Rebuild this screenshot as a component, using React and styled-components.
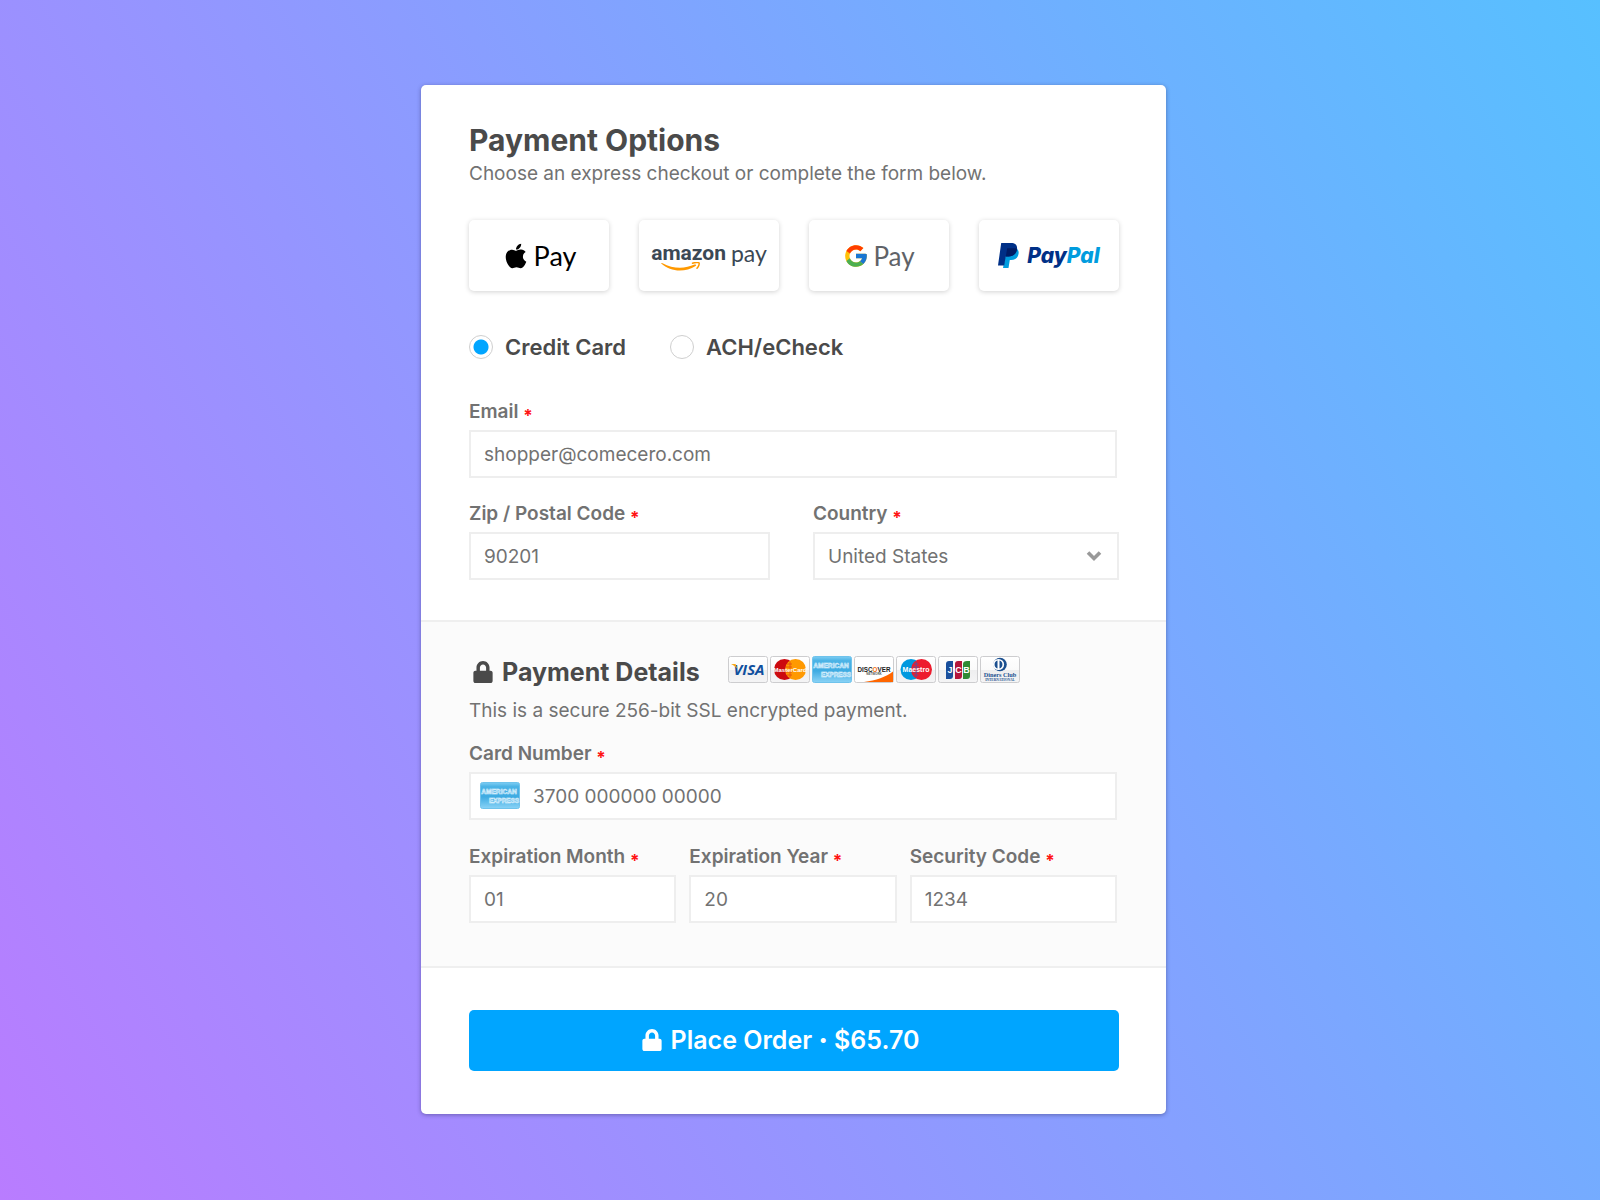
import React, { useState } from 'react';
import styled, { createGlobalStyle, css } from 'styled-components';
import { FaLock, FaApple } from 'react-icons/fa';
import { FcGoogle } from 'react-icons/fc';

const GlobalStyle = createGlobalStyle`
  *, *::before, *::after { box-sizing: border-box; }
  body { margin: 0; background: #8f9aff; }
  button, input, select { font: inherit; }
`;

const Page = styled.main`
  min-height: 100vh;
  display: flex;
  justify-content: center;
  align-items: flex-start;
  padding: 85px 29px 86px 16px;
  background: linear-gradient(60deg, #b97cff 0%, #57c0ff 100%);
  font-family: Inter, "Liberation Sans", sans-serif;
  color: #727272;
  font-size: 19px;
`;

const Card = styled.form`
  width: 100%;
  max-width: 745px;
  background: #fff;
  border-radius: 5px;
  box-shadow: 0 1px 4px rgba(40, 40, 90, 0.45);
`;

const Section = styled.section`
  padding: 37px 47px 40px 48px;
`;

const DetailsSection = styled(Section)`
  padding-top: 32px;
  padding-bottom: 43px;
  background: #fbfbfb;
  border: solid #efefef;
  border-width: 2px 0;
`;

const SubmitSection = styled(Section)`
  padding-top: 42px;
  padding-bottom: 43px;
`;

const Title = styled.h1`
  margin: 0;
  font-size: 30px;
  line-height: 36px;
  font-weight: 700;
  color: #4a4a4a;
`;

const Subtitle = styled.p`
  margin: 0;
  line-height: 32px;
`;

const ExpressRow = styled.div`
  display: grid;
  grid-template-columns: repeat(4, 1fr);
  gap: 30px;
  margin-top: 30px;
`;

const ExpressButton = styled.button`
  height: 71px;
  padding: 0;
  border: 0;
  border-radius: 5px;
  background: #fff;
  box-shadow: 0 1px 5px rgba(0, 0, 0, 0.18);
  display: flex;
  align-items: center;
  justify-content: center;
  cursor: pointer;
`;

const Wordmark = styled.span`
  display: inline-flex;
  align-items: center;
  gap: ${(p) => p.$gap || 0}px;
  font-family: ${(p) => p.$face}, sans-serif;
  font-size: ${(p) => p.$size}px;
  font-weight: ${(p) => p.$weight || 400};
  font-style: ${(p) => (p.$italic ? 'italic' : 'normal')};
  line-height: 26px;
  color: ${(p) => p.$color};
`;

const Tint = styled.span`
  color: ${(p) => p.$color};
`;

const AmazonMark = styled.span`
  display: grid;
  justify-items: start;
  svg {
    margin: -4px 0 0 10px;
  }
`;

const AmazonName = styled.b`
  font-family: Roboto, sans-serif;
  font-size: 21px;
`;

const Methods = styled.fieldset`
  display: flex;
  gap: 44px;
  margin: 40px 0 0;
  padding: 0;
  border: 0;
`;

const Method = styled.label`
  display: flex;
  align-items: center;
  gap: 12px;
  font-size: 22px;
  line-height: 32px;
  font-weight: 600;
  color: #4a4a4a;
`;

const Radio = styled.input`
  appearance: none;
  width: 24px;
  height: 24px;
  margin: 0;
  border: 1px solid #cfcfcf;
  border-radius: 50%;
  background: #fff;
  &:checked {
    background: radial-gradient(circle, #00a5ff 7px, #fff 8px);
  }
`;

const Fields = styled.div`
  display: grid;
  grid-template-columns: ${(p) => p.$columns || '1fr'};
  column-gap: ${(p) => p.$gap || 0}px;
  margin-top: ${(p) => p.$top}px;
  padding-right: ${(p) => (p.$inset ? 2 : 0)}px;
`;

const Field = styled.div`
  display: grid;
  min-width: 0;
`;

const Label = styled.label`
  margin-bottom: 6px;
  height: 24px;
  font-weight: 600;
  line-height: 24px;
`;

const Required = styled.span`
  color: #ff1414;
  font-size: 17px;
  font-weight: 700;
  line-height: 16px;
  vertical-align: -4px;
`;

const box = css`
  width: 100%;
  height: 48px;
  padding: 0 13px;
  border: 2px solid #eee;
  border-radius: 0;
  background: #fff;
  color: #727272;
`;

const Input = styled.input`
  ${box}
`;

const Select = styled.select`
  ${box}
  appearance: none;
`;

const Control = styled.div`
  position: relative;
`;

const Chevron = styled.svg`
  position: absolute;
  right: 17px;
  top: 18px;
  pointer-events: none;
`;

const CardInput = styled(Input)`
  padding-left: 62px;
`;

const InputBrand = styled.span`
  position: absolute;
  left: 11px;
  top: 10px;
  display: flex;
`;

const DetailsHead = styled.div`
  display: flex;
  align-items: center;
  gap: 28px;
`;

const DetailsTitle = styled.h2`
  display: flex;
  align-items: center;
  gap: 8px;
  margin: 0;
  padding-left: 3px;
  font-size: 25px;
  line-height: 36px;
  font-weight: 700;
  color: #4a4a4a;
`;

const DetailsNote = styled(Subtitle)`
  margin-top: 5px;
`;

const Brands = styled.div`
  display: flex;
  gap: 2px;
  padding-bottom: 6px;
`;

const Submit = styled.button`
  display: flex;
  align-items: center;
  justify-content: center;
  gap: 8px;
  width: 100%;
  height: 61px;
  padding: 0 28px 2px 0;
  border: 0;
  border-radius: 5px;
  background: #00a5ff;
  color: #fff;
  font-size: 25px;
  font-weight: 600;
  cursor: pointer;
`;

const Lock = () => <FaLock size={22} aria-hidden="true" />;

const PayPalIcon = () => (
  <svg width="21" height="25" viewBox="0 0 21 25" aria-hidden="true">
    <path d="M9 5h8.500c2.600 1 3.600 3.200 3 6-.9 4.200-3.600 6-7.500 6h-1.200L10.500 25H5z" fill="#009cde" />
    <path d="M3.200 0H13c4.400 0 6.700 2.400 6 6.600-.8 4.600-3.900 6.900-8.500 6.900H7.700L6.200 22.500H0z" fill="#003087" />
    <path d="M9.200 5.200h8.300l1.500.8c-.6 5-3.900 7.500-8.500 7.500H7.800z" fill="#001c64" />
  </svg>
);

const AmazonSmile = () => (
  <svg width="40" height="9" viewBox="0 0 40 9" aria-hidden="true">
    <path d="M0 1.200Q.6.600 1.500 1.200C12 7 24 7 33.500 2.600 35 2 35.800 3 34.600 3.900 24 10.500 10 10.300 0 1.200z" fill="#ff9900" />
    <path d="M31.500 1.300C34 .3 37.500.1 38 .9s-.2 3.400-2 5.300" fill="none" stroke="#ff9900" strokeWidth="1.500" strokeLinecap="round" />
  </svg>
);

function Badge({ brand }) {
  const t = { fontFamily: 'Liberation Sans, sans-serif', textAnchor: 'middle', fontWeight: 700 };
  const face = {
    visa: (
      <>
        <text x="21" y="19" fontSize="15" fontStyle="italic" fill="#0f4f9e" {...t} fontFamily="Open Sans">VISA</text>
        <path d="M3 8h4.500l2 5c-1.500-2-4-4-6.500-5z" fill="#f7a81b" />
      </>
    ),
    mastercard: (
      <>
        <circle cx="14.500" cy="13.500" r="10.500" fill="#cc0a0f" />
        <circle cx="25.500" cy="13.500" r="10.500" fill="#f90" />
        <path d="M20 5.500v16M17 8h5M16 11h6M16 16h6M17 19h5" stroke="#e8590c" strokeWidth="1" />
        <text x="20" y="16" fontSize="6" fill="#fff" {...t}>MasterCard</text>
      </>
    ),
    amex: (
      <>
        <text x="19" y="12" fontSize="6.600" fill="#5cbbe9" stroke="#e9f7ff" strokeWidth=".5" {...t}>AMERICAN</text>
        <text x="24" y="20.500" fontSize="6.400" fill="#5cbbe9" stroke="#e9f7ff" strokeWidth=".5" {...t}>EXPRESS</text>
      </>
    ),
    discover: (
      <>
        <path d="M39 15.500V26H10c12-1.500 22-5 29-10.500z" fill="#f60" />
        <text x="20" y="15.500" fontSize="6.300" fill="#222" {...t}>DISC<tspan fill="#f47216">O</tspan>VER</text>
        <text x="20" y="19" fontSize="3" fill="#555" {...t}>NETWORK</text>
      </>
    ),
    maestro: (
      <>
        <circle cx="15" cy="13.500" r="10.500" fill="#0099df" />
        <circle cx="25.500" cy="13.500" r="10.500" fill="#ed1c2e" />
        <path d="M20.200 5.500v16M18 8h4.500M17 11h6M17 16h6M18 19h4.500" stroke="#6c4a8c" strokeWidth="1" />
        <text x="20" y="16" fontSize="7" fill="#fff" {...t}>Maestro</text>
      </>
    ),
    jcb: (
      <>
        <path d="M11 5h4v15q0 3-3 3H8V8q0-3 3-3z" fill="#1a4f9c" />
        <path d="M20 5h4v15q0 3-3 3h-4V8q0-3 3-3z" fill="#b3163c" />
        <path d="M29 5h3v15q0 3-3 3h-4V8q0-3 4-3z" fill="#2f8a35" />
        <text x="12" y="17" fontSize="9" fill="#fff" {...t}>J</text>
        <text x="20.500" y="17" fontSize="9" fill="#fff" {...t}>C</text>
        <text x="28.500" y="17" fontSize="9" fill="#fff" {...t}>B</text>
      </>
    ),
    diners: (
      <>
        <circle cx="20" cy="8.500" r="6.800" fill="#1b4f8f" />
        <circle cx="18.500" cy="8.500" r="5.600" fill="#fff" />
        <path d="M17.500 4.500a4.200 4.200 0 0 0 0 8zM19.500 4.500a4.200 4.200 0 0 1 0 8z" fill="#1b4f8f" />
        <text x="20" y="20.500" fontSize="6.300" fill="#1b4f8f" {...t} fontFamily="Liberation Serif">Diners Club</text>
        <text x="20" y="24.500" fontSize="3.500" fill="#1b4f8f" {...t} fontFamily="Liberation Serif">INTERNATIONAL</text>
      </>
    ),
  }[brand];
  return (
    <svg width="40" height="27" viewBox="0 0 40 27" role="img" aria-label={brand}>
      <defs>
        <linearGradient id="amexFill" x1="0" y1="0" x2="0" y2="1">
          <stop offset="0" stopColor="#7fcdf3" />
          <stop offset=".15" stopColor="#4db4e6" />
          <stop offset=".55" stopColor="#3eabe2" />
          <stop offset="1" stopColor="#8bd3f6" />
        </linearGradient>
        <linearGradient id="plainFill" x1="0" y1="0" x2="0" y2="1">
          <stop offset="0" stopColor="#fff" />
          <stop offset=".5" stopColor="#fafafa" />
          <stop offset=".52" stopColor="#eeeeef" />
          <stop offset="1" stopColor="#f4f4f5" />
        </linearGradient>
      </defs>
      <rect
        x=".5" y=".5" width="39" height="26" rx="2"
        fill={brand === 'amex' ? 'url(#amexFill)' : brand === 'discover' ? '#fff' : 'url(#plainFill)'}
        stroke={brand === 'amex' ? '#6fc3ec' : '#cdcdcf'}
      />
      {face}
    </svg>
  );
}

const brands = ['visa', 'mastercard', 'amex', 'discover', 'maestro', 'jcb', 'diners'];

function TextField({ id, label, value }) {
  return (
    <Field>
      <Label htmlFor={id}>{label} <Required>*</Required></Label>
      <Input id={id} defaultValue={value} required />
    </Field>
  );
}

export default function App() {
  const [method, setMethod] = useState('card');
  return (
    <Page>
      <GlobalStyle />
      <Card onSubmit={(e) => e.preventDefault()}>
        <Section>
          <Title>Payment Options</Title>
          <Subtitle>Choose an express checkout or complete the form below.</Subtitle>
          <ExpressRow>
            <ExpressButton type="button">
              <Wordmark $face="Lato" $size={27} $color="#000" $gap={4}>
                <FaApple size={28} aria-hidden="true" />Pay
              </Wordmark>
            </ExpressButton>
            <ExpressButton type="button">
              <AmazonMark>
                <Wordmark $face="Lato" $size={23} $color="#3b4854" $gap={5}>
                  <AmazonName>amazon</AmazonName>pay
                </Wordmark>
                <AmazonSmile />
              </AmazonMark>
            </ExpressButton>
            <ExpressButton type="button">
              <Wordmark $face="Lato" $size={26} $color="#5f6368" $gap={4}>
                <FcGoogle size={26} aria-hidden="true" />Pay
              </Wordmark>
            </ExpressButton>
            <ExpressButton type="button">
              <Wordmark $face="Inter" $size={21} $weight={800} $italic $color="#003087" $gap={8}>
                <PayPalIcon />
                <span>Pay<Tint $color="#009cde">Pal</Tint></span>
              </Wordmark>
            </ExpressButton>
          </ExpressRow>
          <Methods aria-label="Payment method">
            <Method>
              <Radio type="radio" name="method" checked={method === 'card'} onChange={() => setMethod('card')} />
              Credit Card
            </Method>
            <Method>
              <Radio type="radio" name="method" checked={method === 'ach'} onChange={() => setMethod('ach')} />
              ACH/eCheck
            </Method>
          </Methods>
          <Fields $top={37} $inset>
            <TextField id="email" label="Email" value="shopper@comecero.com" />
          </Fields>
          <Fields $top={24} $columns="301fr 306fr" $gap={43}>
            <TextField id="zip" label="Zip / Postal Code" value="90201" />
            <Field>
              <Label htmlFor="country">Country <Required>*</Required></Label>
              <Control>
                <Select id="country" defaultValue="United States">
                  <option>United States</option>
                </Select>
                <Chevron width="16" height="12" viewBox="0 0 16 12" aria-hidden="true">
                  <path d="M2 2.500l6 6 6-6" fill="none" stroke="#999" strokeWidth="3.600" />
                </Chevron>
              </Control>
            </Field>
          </Fields>
        </Section>
        <DetailsSection>
          <DetailsHead>
            <DetailsTitle><Lock />Payment Details</DetailsTitle>
            <Brands>{brands.map((b) => <Badge key={b} brand={b} />)}</Brands>
          </DetailsHead>
          <DetailsNote>This is a secure 256-bit SSL encrypted payment.</DetailsNote>
          <Fields $top={15} $inset>
            <Field>
              <Label htmlFor="number">Card Number <Required>*</Required></Label>
              <Control>
                <CardInput id="number" defaultValue="3700 000000 00000" required />
                <InputBrand><Badge brand="amex" /></InputBrand>
              </Control>
            </Field>
          </Fields>
          <Fields $top={25} $columns="repeat(3, 1fr)" $gap={13} $inset>
            <TextField id="month" label="Expiration Month" value="01" />
            <TextField id="year" label="Expiration Year" value="20" />
            <TextField id="code" label="Security Code" value="1234" />
          </Fields>
        </DetailsSection>
        <SubmitSection>
          <Submit type="submit"><Lock /><span>Place Order <b>·</b> $65.70</span></Submit>
        </SubmitSection>
      </Card>
    </Page>
  );
}
